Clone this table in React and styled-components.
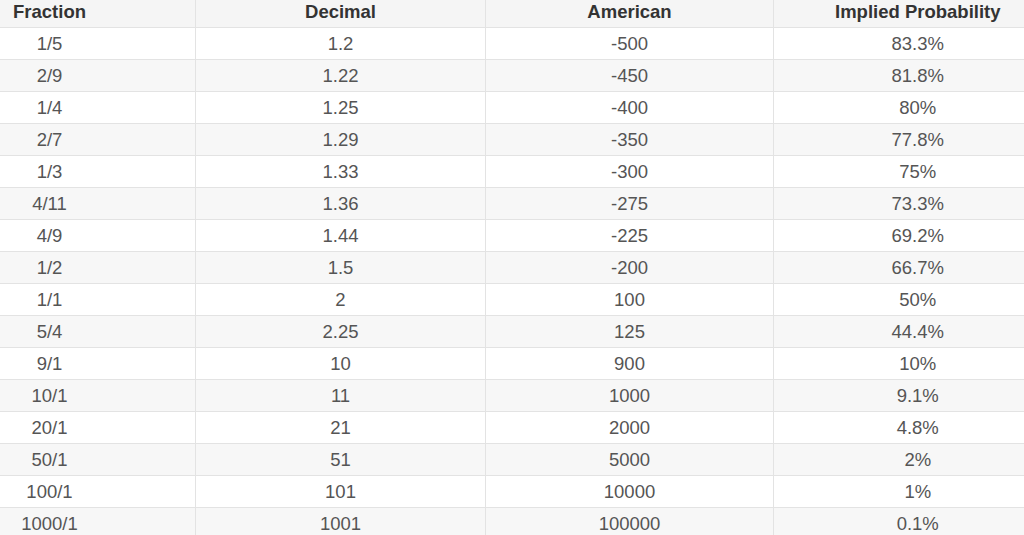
import React from "react";
import styled, { createGlobalStyle } from "styled-components";

const GlobalStyle = createGlobalStyle`
  html, body {
    margin: 0;
    padding: 0;
    background: #fff;
    overflow: hidden;
  }
  body {
    font-family: "Liberation Sans", Arial, sans-serif;
  }
`;

const Page = styled.div`
  width: 1024px;
  height: 535px;
  overflow: hidden;
`;

const Table = styled.table`
  margin-left: -97px;
  width: 1158px;
  border-collapse: collapse;
  table-layout: fixed;
  font-size: 18.5px;
`;

const HeadCell = styled.th`
  height: 27px;
  padding: 0;
  background: #f5f5f5;
  color: #333;
  font-weight: bold;
  text-align: center;
  vertical-align: top;
  line-height: 24px;
  border-left: 1px solid #e3e3e3;
  border-bottom: 1px solid #e3e3e3;
`;

const Row = styled.tr`
  background: ${(p) => (p.$striped ? "#f7f7f7" : "#fff")};
`;

const Cell = styled.td`
  height: 31px;
  padding: 0;
  color: #555;
  text-align: center;
  line-height: 31px;
  border-left: 1px solid #e3e3e3;
  border-bottom: 1px solid #e3e3e3;
`;

const rows = [
  ["1/5", "1.2", "-500", "83.3%"],
  ["2/9", "1.22", "-450", "81.8%"],
  ["1/4", "1.25", "-400", "80%"],
  ["2/7", "1.29", "-350", "77.8%"],
  ["1/3", "1.33", "-300", "75%"],
  ["4/11", "1.36", "-275", "73.3%"],
  ["4/9", "1.44", "-225", "69.2%"],
  ["1/2", "1.5", "-200", "66.7%"],
  ["1/1", "2", "100", "50%"],
  ["5/4", "2.25", "125", "44.4%"],
  ["9/1", "10", "900", "10%"],
  ["10/1", "11", "1000", "9.1%"],
  ["20/1", "21", "2000", "4.8%"],
  ["50/1", "51", "5000", "2%"],
  ["100/1", "101", "10000", "1%"],
  ["1000/1", "1001", "100000", "0.1%"],
];

export default function App() {
  return (
    <Page>
      <GlobalStyle />
      <Table>
        <colgroup>
          <col style={{ width: 292 }} />
          <col style={{ width: 290 }} />
          <col style={{ width: 288 }} />
          <col style={{ width: 288 }} />
        </colgroup>
        <thead>
          <tr>
            <HeadCell>Fraction</HeadCell>
            <HeadCell>Decimal</HeadCell>
            <HeadCell>American</HeadCell>
            <HeadCell>Implied Probability</HeadCell>
          </tr>
        </thead>
        <tbody>
          {rows.map((r, i) => (
            <Row key={r[0]} $striped={i % 2 === 1}>
              {r.map((v, j) => (
                <Cell key={j}>{v}</Cell>
              ))}
            </Row>
          ))}
        </tbody>
      </Table>
    </Page>
  );
}
